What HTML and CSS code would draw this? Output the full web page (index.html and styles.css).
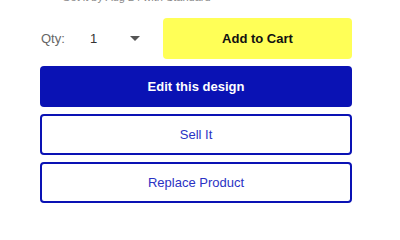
FILE: index.html
```html
<!DOCTYPE html>
<html>
<head>
<meta charset="utf-8">
<link rel="stylesheet" href="styles.css">
</head>
<body>
<div class="panel">
  <div class="ship">Get it by Aug 24 with Standard</div>
  <div class="cart-row">
    <div class="qty">
      <span class="qty-label">Qty:</span>
      <span class="qty-val">1</span>
      <span class="caret"></span>
    </div>
    <button class="btn btn-cart">Add to Cart</button>
  </div>
  <button class="btn btn-edit">Edit this design</button>
  <button class="btn btn-outline">Sell It</button>
  <button class="btn btn-outline">Replace Product</button>
</div>
</body>
</html>
```
FILE: styles.css
```css
html, body {
  margin: 0;
  padding: 0;
  background: #fff;
  width: 400px;
  height: 213px;
  overflow: hidden;
}
.panel {
  display: flex;
  flex-direction: column;
  gap: 7px;
  width: 312px;
  margin-left: 40px;
  font-family: "Liberation Sans", Arial, sans-serif;
}
.ship {
  margin-top: -9px;
  margin-bottom: 8px;
  margin-left: 22px;
  font-size: 11px;
  line-height: 12px;
  color: #888;
  height: 12px;
}
.cart-row {
  display: flex;
  height: 41px;
}
.qty {
  width: 123px;
  display: flex;
  align-items: center;
  font-size: 13px;
}
.qty-label {
  color: #666;
  width: 49px;
  padding-left: 1px;
}
.qty-val {
  color: #333;
  width: 40px;
}
.caret {
  width: 0;
  height: 0;
  border-left: 5px solid transparent;
  border-right: 5px solid transparent;
  border-top: 5px solid #555;
  margin-top: -1px;
}
.btn {
  display: flex;
  align-items: center;
  justify-content: center;
  height: 41px;
  border-radius: 4px;
  font-family: "Liberation Sans", Arial, sans-serif;
  font-size: 13px;
  padding: 0;
  box-sizing: border-box;
}
.btn-cart {
  flex: 1;
  background: #ffff57;
  border: none;
  color: #111;
  font-weight: bold;
}
.btn-edit {
  width: 312px;
  background: #0a12b4;
  border: none;
  color: #fff;
  font-weight: bold;
}
.btn-outline {
  width: 312px;
  background: #fff;
  border: 2px solid #0a12b4;
  color: #2a32c4;
}
```
